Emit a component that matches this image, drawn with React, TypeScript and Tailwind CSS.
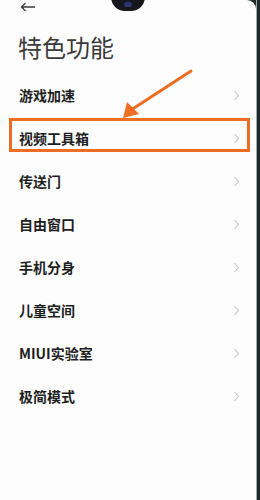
const ITEMS = ['游戏加速', '视频工具箱', '传送门', '自由窗口', '手机分身', '儿童空间', 'MIUI实验室', '极简模式'];

function Chevron() {
  return (
    <svg width="7" height="11" viewBox="0 0 7 11" fill="none" className="shrink-0">
      <path d="M1.5 1 L5.5 5.5 L1.5 10" stroke="#c4c4c4" strokeWidth="1.1" />
    </svg>
  );
}

export default function App() {
  return (
    <div className="flex h-[500px] w-[260px] bg-[#23282b] font-['Noto_Sans_CJK_SC','Noto_Sans',sans-serif]">
      <div className="relative flex flex-1 flex-col rounded-tr-[9px] bg-[#fdfdfd]">
        {/* camera notch */}
        <div className="absolute left-[111px] top-[-17px] h-[28px] w-[34px] rounded-full bg-[#15171c]">
          <div className="absolute left-[13px] top-[19px] h-[5px] w-[8px] rounded-full bg-[#2c3570]" />
        </div>

        {/* back */}
        <div className="flex h-[14px] items-center pl-[20px]">
          <svg width="16" height="10" viewBox="0 0 16 10" fill="none">
            <path d="M15 5 H1.5 M5.5 1 L1.5 5 L5.5 9" stroke="#3a3a3a" strokeWidth="1.3" />
          </svg>
        </div>

        {/* title */}
        <h1 className="mt-[18px] pl-[18px] text-[24px] leading-[30px] font-normal text-[#3a3a3a]">特色功能</h1>

        {/* list */}
        <ul className="mt-[12px]">
          {ITEMS.map((label, i) => (
            <li key={label} className="relative flex h-[43px] items-center justify-between pl-[19px] pr-[16px]">
              <span className="text-[14px] font-semibold text-[#1e1e1e]">{label}</span>
              <Chevron />
              {i === 1 && (
                <div className="absolute left-[9px] top-[1px] h-[34px] w-[241px] border-[3px] border-[#ef6d22]" />
              )}
            </li>
          ))}
        </ul>

        {/* annotation arrow */}
        <svg className="absolute left-0 top-0" width="255" height="160" viewBox="0 0 255 160" fill="none">
          <line x1="191" y1="71" x2="131" y2="110" stroke="#ef6d22" strokeWidth="3" strokeLinecap="round" />
          <polygon points="123,118 127,102 139,114" fill="#ef6d22" />
        </svg>
      </div>
      <div className="w-px bg-[#8fb0b5]" />
      <div className="w-[3px]" />
    </div>
  );
}
